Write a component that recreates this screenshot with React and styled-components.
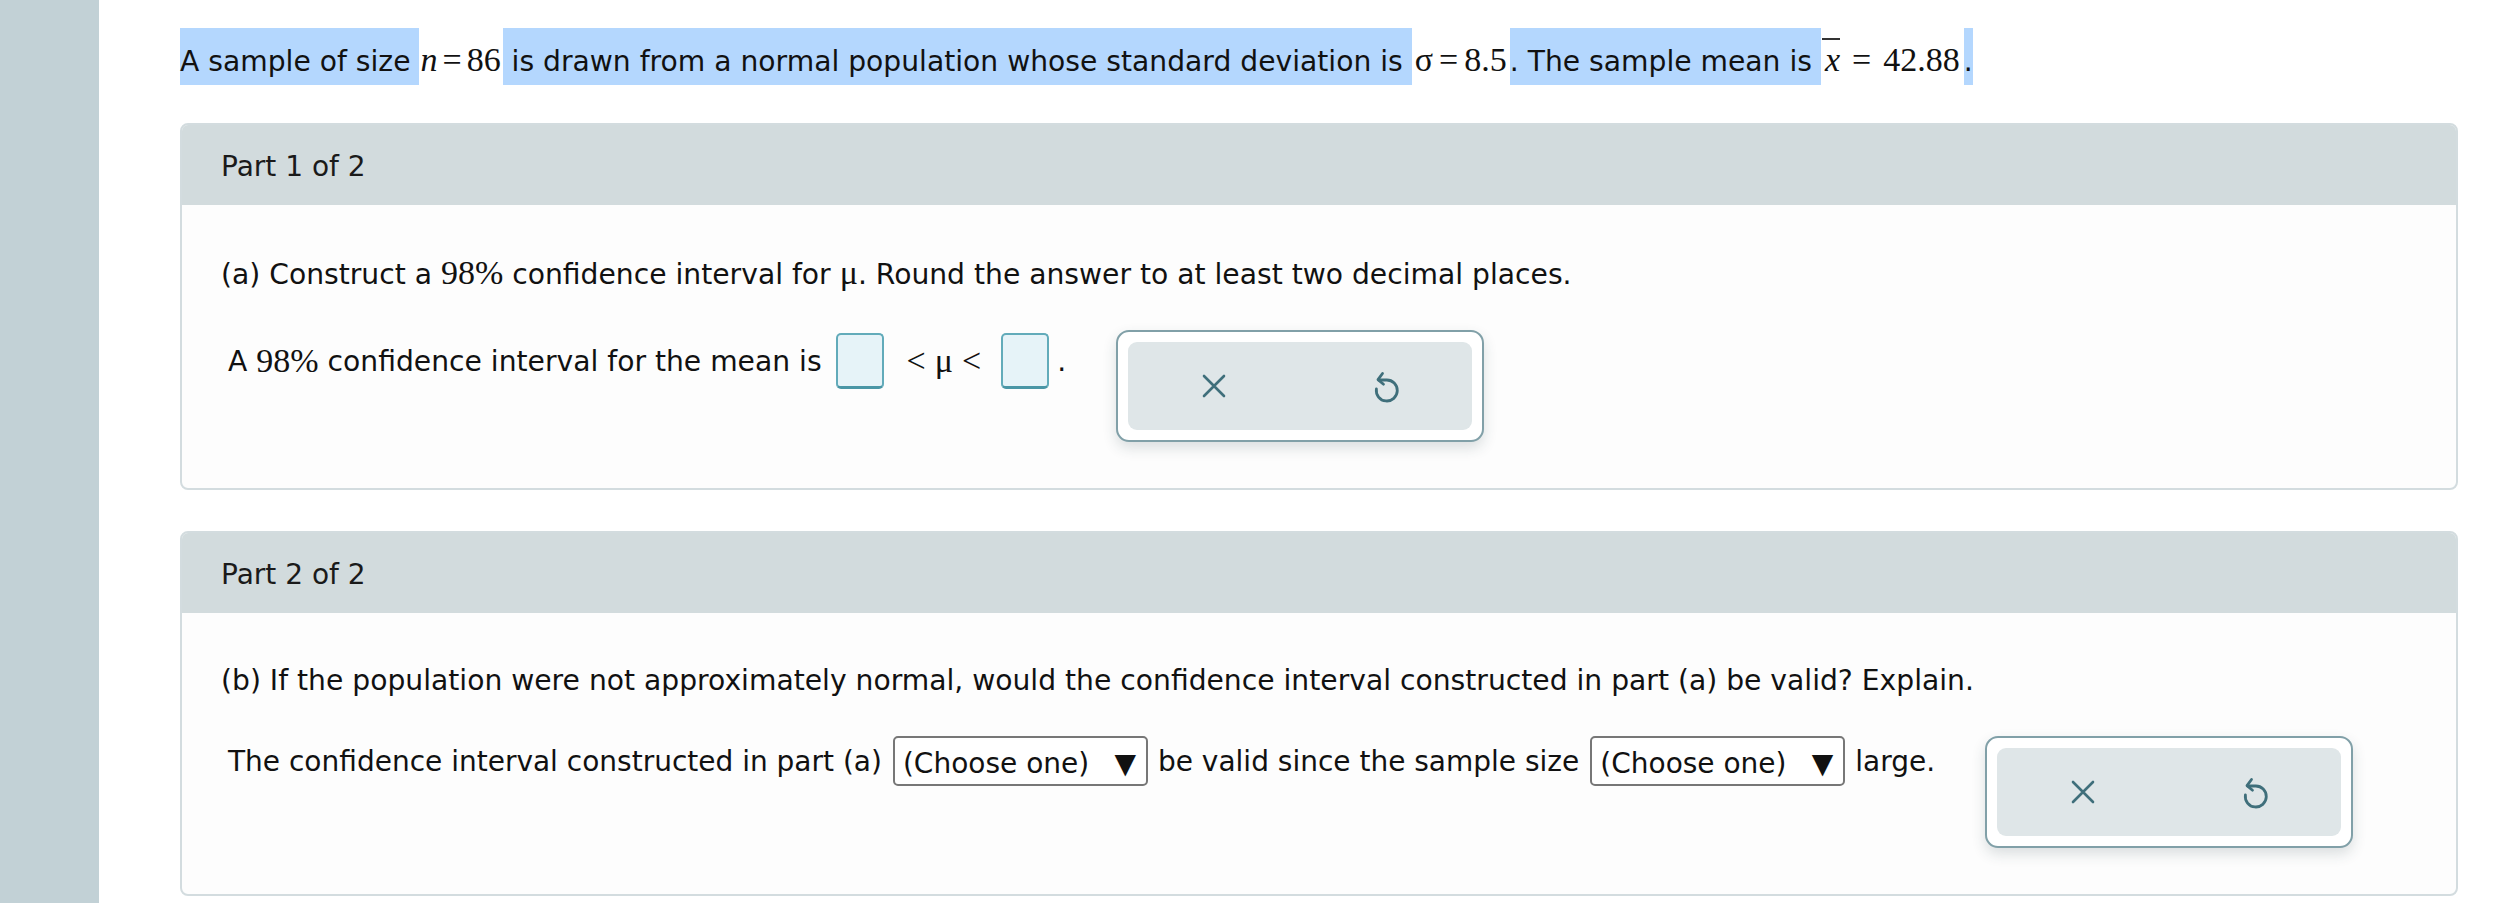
import React from 'react';
import styled, { createGlobalStyle } from 'styled-components';

const GlobalStyle = createGlobalStyle`
    html, body {
        margin: 0;
        padding: 0;
        background: #ffffff;
    }
    body {
        font-family: "DejaVu Sans", Verdana, sans-serif;
        color: #111;
    }
`

const Page = styled.div`
    display: flex;
    min-height: 903px;
`
const Sidebar = styled.div`
    width: 99px;
    flex-shrink: 0;
    background: #c2d1d6;
`
const Main = styled.div`
    flex: 1;
    padding: 27px 40px 0 81px;
`
const Intro = styled.div`
    font-size: 28.2px;
    line-height: 56px;
    height: 51px;
    padding-top: 5px;
    white-space: nowrap;
`
const Selected = styled.span`
    background: #b4d7fe;
    padding: 17px 0 7px;
`
const Math = styled.span`
    font-family: "Liberation Serif", "Times New Roman", serif;
    font-size: 34px;
    padding: ${p => p.$pad || '0'};
`
const Var = styled.i`
    font-family: "Liberation Serif", "Times New Roman", serif;
    font-style: italic;
`
const Rel = styled.span`
    margin: 0 ${p => p.$gap || 6}px;
`
const Bar = styled.span`
    display: inline-block;
    line-height: 1;
    border-top: 2px solid #333;
    padding: 3px 0 0 3px;
`
const Card = styled.section`
    margin-top: ${p => p.$top}px;
    border: 2px solid #d3dcdf;
    border-radius: 8px;
    overflow: hidden;
    background: #fdfdfd;
`
const CardHeader = styled.div`
    height: 80px;
    background: #d2dbdd;
    display: flex;
    align-items: center;
    padding-left: 39px;
    padding-top: 2px;
    box-sizing: border-box;
    font-size: 28px;
    color: #1a1a1a;
`
const CardBody = styled.div`
    padding: 48px 40px 46px 39px;
`
const Question = styled.div`
    font-size: 28.2px;
    line-height: 40px;
    white-space: nowrap;
`
const AnswerRow = styled.div`
    margin-top: 35px;
    padding-left: 7px;
    display: flex;
    align-items: flex-start;
    gap: 50px;
`
const AnswerLine = styled.div`
    display: flex;
    align-items: center;
    font-size: ${p => p.$size || 28.2}px;
    white-space: pre;
`
const Input = styled.span`
    display: inline-block;
    width: 44px;
    height: 51px;
    margin: 3px 0;
    margin-left: ${p => p.$left || 0}px;
    background: #e6f3f8;
    border: 2px solid #62abba;
    border-bottom: 3px solid #4a96a6;
    border-radius: 5px;
`
const Relation = styled.span`
    font-family: "Liberation Serif", "Times New Roman", serif;
    font-size: 34px;
    margin: 0 20px 0 23px;
    display: flex;
    gap: 9px;
`
const Dot = styled.span`
    margin-left: 8px;
`
const Select = styled.div`
    width: 255px;
    height: 50px;
    box-sizing: border-box;
    margin: 0 10px 0 11px;
    padding: 4px 10px 0 8px;
    display: flex;
    align-items: center;
    justify-content: space-between;
    border: 2px solid #777;
    border-radius: 5px;
    background: #fff;
    font-size: 28px;
`
const Tools = styled.div`
    flex-shrink: 0;
    padding: 10px;
    border: 2px solid #81a0a8;
    border-radius: 13px;
    background: #fff;
    box-shadow: 0 6px 14px rgba(40, 60, 70, 0.16);
`
const ToolsInner = styled.div`
    width: 344px;
    height: 88px;
    display: flex;
    background: #dfe6e8;
    border-radius: 9px;
`
const ToolButton = styled.div`
    flex: 1;
    display: flex;
    align-items: center;
    justify-content: center;
    padding-top: ${p => p.$drop || 0}px;
`

const ClearIcon = () => (
    <svg width="24" height="24" viewBox="0 0 24 24" fill="none" stroke="#3f6f7b" strokeWidth="2.6" strokeLinecap="round">
        <path d="M2 2 L22 22 M22 2 L2 22" />
    </svg>
)

const UndoIcon = () => (
    <svg width="26" height="32" viewBox="0 0 26 32" fill="none" stroke="#3f6f7b" strokeWidth="2.8" strokeLinecap="round" strokeLinejoin="round">
        <path d="M3.4 18 A10.5 10.5 0 1 0 13.5 9 H5.5" />
        <path d="M9.5 2.5 L5 8.6 L10.5 13.2" />
    </svg>
)

const ToolBox = () => (
    <Tools>
        <ToolsInner>
            <ToolButton><ClearIcon /></ToolButton>
            <ToolButton $drop={2}><UndoIcon /></ToolButton>
        </ToolsInner>
    </Tools>
)

const App = () => {
    return (
        <Page>
            <GlobalStyle />
            <Sidebar />
            <Main>
                <Intro>
                    <Selected>A sample of size </Selected>
                    <Math $pad="0 2px 0 1px"><Var>n</Var><Rel $gap={5}>=</Rel>86</Math>
                    <Selected> is drawn from a normal population whose standard deviation is </Selected>
                    <Math $pad="0 3px 0 3px">σ<Rel $gap={6}>=</Rel>8.5</Math>
                    <Selected>. The sample mean is </Selected>
                    <Math $pad="0 4px 0 1px"><Bar><Var>x</Var></Bar><Rel $gap={12}>=</Rel>42.88</Math>
                    <Selected>.</Selected>
                </Intro>

                <Card $top={40}>
                    <CardHeader>Part 1 of 2</CardHeader>
                    <CardBody>
                        <Question>
                            (a) Construct a <Math>98%</Math> confidence interval for <Math>μ</Math>. Round the answer to at least two decimal places.
                        </Question>
                        <AnswerRow>
                            <AnswerLine>
                                A <Math>98%</Math> confidence interval for the mean is
                                <Input $left={14} />
                                <Relation><span>&lt;</span><span>μ</span><span>&lt;</span></Relation>
                                <Input />
                                <Dot>.</Dot>
                            </AnswerLine>
                            <ToolBox />
                        </AnswerRow>
                    </CardBody>
                </Card>

                <Card $top={41}>
                    <CardHeader>Part 2 of 2</CardHeader>
                    <CardBody>
                        <Question>
                            (b) If the population were not approximately normal, would the confidence interval constructed in part (a) be valid? Explain.
                        </Question>
                        <AnswerRow>
                            <AnswerLine $size={28}>
                                The confidence interval constructed in part (a)
                                <Select><span>(Choose one)</span><span>▼</span></Select>
                                be valid since the sample size
                                <Select><span>(Choose one)</span><span>▼</span></Select>
                                large.
                            </AnswerLine>
                            <ToolBox />
                        </AnswerRow>
                    </CardBody>
                </Card>
            </Main>
        </Page>
    );
};

export default App;
